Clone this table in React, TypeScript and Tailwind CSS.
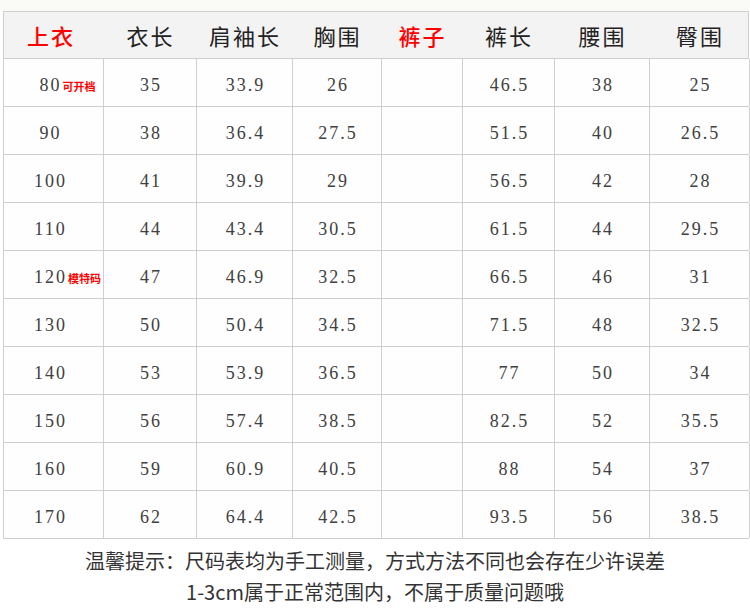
import React from "react";

type Row = {
    size: string;
    note?: string;
    values: string[];
};

const headers = ["衣长", "肩袖长", "胸围", "裤子", "裤长", "腰围", "臀围"];

const rows: Row[] = [
    { size: "80", note: "可开档", values: ["35", "33.9", "26", "", "46.5", "38", "25"] },
    { size: "90", values: ["38", "36.4", "27.5", "", "51.5", "40", "26.5"] },
    { size: "100", values: ["41", "39.9", "29", "", "56.5", "42", "28"] },
    { size: "110", values: ["44", "43.4", "30.5", "", "61.5", "44", "29.5"] },
    { size: "120", note: "模特码", values: ["47", "46.9", "32.5", "", "66.5", "46", "31"] },
    { size: "130", values: ["50", "50.4", "34.5", "", "71.5", "48", "32.5"] },
    { size: "140", values: ["53", "53.9", "36.5", "", "77", "50", "34"] },
    { size: "150", values: ["56", "57.4", "38.5", "", "82.5", "52", "35.5"] },
    { size: "160", values: ["59", "60.9", "40.5", "", "88", "54", "37"] },
    { size: "170", values: ["62", "64.4", "42.5", "", "93.5", "56", "38.5"] },
];

const cols = "grid grid-cols-[100px_93px_96px_89px_81px_92px_95px_100px]";
const cjk = "font-['Noto_Sans_CJK_SC',sans-serif]";
const num = "font-['Liberation_Serif','DejaVu_Serif',serif] text-[18px] tracking-[2px] text-[#404040]";

export default function App() {
    return (
        <div className="h-[615px] w-[750px] bg-white">
            {/* top strip */}
            <div className="h-[11px] bg-[#fafaf6]" />

            <div className="ml-[3px] w-[746px]">
                {/* header */}
                <div className={`${cols} h-[48px] border border-[#cfcfcf] bg-[#f3f3f3] ${cjk} text-[22px] tracking-[2px] text-[#222]`}>
                    <div className="flex items-center justify-center pr-[6px] font-medium text-[#ff0000]">上衣</div>
                    {headers.map((h) => (
                        <div
                            key={h}
                            className={`flex items-center justify-center ${h === "裤子" ? "font-medium text-[#ff0000]" : ""}`}
                        >
                            {h}
                        </div>
                    ))}
                </div>

                {/* body */}
                {rows.map((r) => (
                    <div key={r.size} className={`${cols} h-[48px] border-b border-l border-[#cfcfcf] bg-[#fefefe]`}>
                        <div className="flex items-center justify-center border-r border-[#cfcfcf] pt-[6px] pr-[6px]">
                            <span className={`relative ${num}`}>
                                {r.size}
                                {r.note && (
                                    <span className={`absolute top-1/2 left-full ml-[1px] -translate-y-1/2 whitespace-nowrap ${cjk} text-[11px] font-bold tracking-normal text-[#ff0000]`}>
                                        {r.note}
                                    </span>
                                )}
                            </span>
                        </div>
                        {r.values.map((v, i) => (
                            <div key={i} className={`flex items-center justify-center border-r border-[#cfcfcf] pt-[6px] pl-[2px] ${num}`}>
                                {v}
                            </div>
                        ))}
                    </div>
                ))}
            </div>

            {/* footer note */}
            <div className={`mt-[6px] text-center ${cjk} text-[20px] leading-[31px] text-[#333]`}>
                <p>温馨提示：尺码表均为手工测量，方式方法不同也会存在少许误差</p>
                <p>1-3cm属于正常范围内，不属于质量问题哦</p>
            </div>
        </div>
    );
}
